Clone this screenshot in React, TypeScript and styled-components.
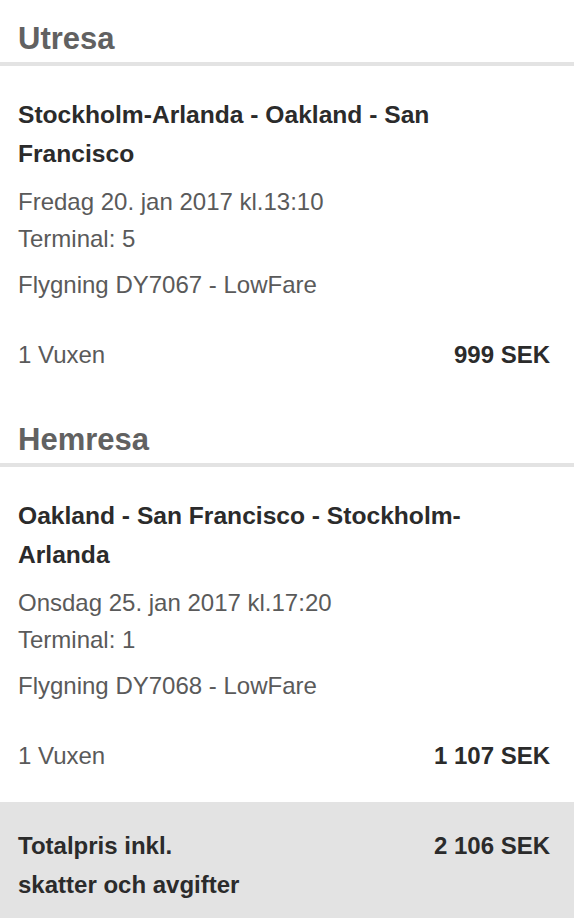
import React from "react";
import styled, { createGlobalStyle } from "styled-components";

const GlobalStyle = createGlobalStyle`
  html, body {
    margin: 0;
    padding: 0;
    background: #ffffff;
  }
  body {
    font-family: "Liberation Sans", Arial, sans-serif;
    -webkit-font-smoothing: antialiased;
  }
`;

const Page = styled.div`
  width: 100%;
  background: #ffffff;
`;

const LegHeader = styled.h2`
  margin: 0;
  padding: 19px 18px 3px;
  border-bottom: 4px solid #e3e3e3;
  font-size: 31px;
  line-height: 40px;
  font-weight: 700;
  color: #616161;
`;

const LegBody = styled.section`
  padding: 29px 24px 28px 18px;
`;

const Route = styled.h3`
  margin: 0 0 10px;
  font-size: 24.6px;
  line-height: 39px;
  font-weight: 700;
  color: #2b2b2b;
`;

const Detail = styled.p<{ $gap?: number }>`
  margin: ${(p) => p.$gap ?? 0}px 0 0;
  font-size: 24px;
  line-height: 37px;
  color: #5a5a5a;
`;

const PriceRow = styled.div`
  display: flex;
  justify-content: space-between;
  align-items: baseline;
  margin-top: 33px;
  font-size: 24px;
  line-height: 37px;
`;

const Passengers = styled.span`
  color: #5a5a5a;
`;

const Price = styled.span`
  font-weight: 700;
  color: #2b2b2b;
`;

const TotalBox = styled.div`
  display: flex;
  justify-content: space-between;
  align-items: flex-start;
  padding: 24px 24px 20px 18px;
  background: #e3e3e3;
  font-size: 24px;
  line-height: 39px;
  font-weight: 700;
  color: #2b2b2b;
`;

const TotalLabel = styled.div`
  width: 232px;
`;

interface Leg {
  title: string;
  route: string;
  date: string;
  terminal: string;
  flight: string;
  passengers: string;
  price: string;
}

const legs: Leg[] = [
  {
    title: "Utresa",
    route: "Stockholm-Arlanda - Oakland - San Francisco",
    date: "Fredag 20. jan 2017 kl.13:10",
    terminal: "Terminal: 5",
    flight: "Flygning DY7067 - LowFare",
    passengers: "1 Vuxen",
    price: "999 SEK",
  },
  {
    title: "Hemresa",
    route: "Oakland - San Francisco - Stockholm-Arlanda",
    date: "Onsdag 25. jan 2017 kl.17:20",
    terminal: "Terminal: 1",
    flight: "Flygning DY7068 - LowFare",
    passengers: "1 Vuxen",
    price: "1 107 SEK",
  },
];

export default function App() {
  return (
    <Page>
      <GlobalStyle />
      {legs.map((leg) => (
        <div key={leg.title}>
          <LegHeader>{leg.title}</LegHeader>
          <LegBody>
            <Route>{leg.route}</Route>
            <Detail>{leg.date}</Detail>
            <Detail>{leg.terminal}</Detail>
            <Detail $gap={9}>{leg.flight}</Detail>
            <PriceRow>
              <Passengers>{leg.passengers}</Passengers>
              <Price>{leg.price}</Price>
            </PriceRow>
          </LegBody>
        </div>
      ))}
      <TotalBox>
        <TotalLabel>Totalpris inkl. skatter och avgifter</TotalLabel>
        <span>2 106 SEK</span>
      </TotalBox>
    </Page>
  );
}
